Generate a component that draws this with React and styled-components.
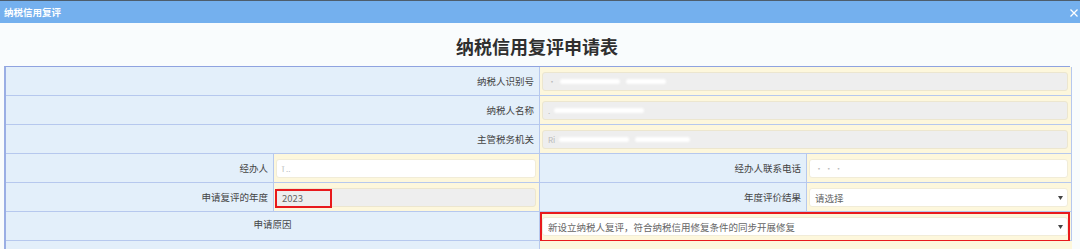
import React from "react";
import styled, { createGlobalStyle } from "styled-components";

const Global = createGlobalStyle`
  html, body { margin: 0; padding: 0; background: #f9fcfd; }
  body { font-family: "Noto Sans CJK SC", "Liberation Sans", sans-serif; overflow: hidden; }
`;

const Page = styled.div`
  width: 1080px;
  height: 249px;
  overflow: hidden;
  border-top: 1px solid #4d5d6c;
  box-sizing: border-box;
  background: #f9fcfd;
`;

const TitleBar = styled.div`
  height: 22px;
  background: #74b0ee;
  display: flex;
  align-items: center;
  justify-content: space-between;
  padding: 0 2px 0 4px;
`;

const BarTitle = styled.span`
  color: #ffffff;
  font-size: 9.5px;
  font-weight: 700;
`;

const Close = styled.svg`
  width: 8px;
  height: 8px;
  margin-top: 1px;
`;

const Body = styled.div`
  padding: 0 10px 0 4px;
`;

const Heading = styled.h1`
  margin: 0;
  height: 43px;
  display: flex;
  align-items: center;
  justify-content: center;
  padding-top: 2px;
  box-sizing: border-box;
  font-size: 18px;
  font-weight: 700;
  color: #2f2f2f;
`;

const Table = styled.div`
  display: grid;
  grid-template-columns: 268px 266px 267px 265px;
  grid-auto-rows: 29px;
  border-top: 1px solid #8fa3e0;
  border-left: 2px solid #9aaee4;
  border-right: 1px solid #8fa3e0;
`;

const Label = styled.div`
  grid-column: span ${(p) => p.$span || 1};
  background: #e3effa;
  border-right: 1px solid #b6c8ee;
  border-bottom: 1px solid #b6c8ee;
  display: flex;
  align-items: center;
  justify-content: ${(p) => (p.$center ? "center" : "flex-end")};
  padding: 0 ${(p) => (p.$center ? "0" : "5px")} ${(p) => (p.$center ? "4px" : "0")} 0;
  font-size: 9.5px;
  color: #444;
  box-sizing: border-box;
  white-space: nowrap;
`;

const Value = styled.div`
  grid-column: span ${(p) => p.$span || 1};
  background: #fdf7dc;
  border-right: 1px solid #b6c8ee;
  border-bottom: 1px solid #b6c8ee;
  display: flex;
  align-items: center;
  padding: 0 3px 0 2px;
  box-sizing: border-box;
  position: relative;
  &:last-child { border-right: none; }
`;

const Field = styled.div`
  flex: 1;
  height: 19px;
  margin-top: 1px;
  border-radius: 3px;
  border: 1px solid ${(p) => (p.$disabled ? "#ece6cf" : "#f1ecd8")};
  background: ${(p) => (p.$disabled ? "#eeeeee" : "#ffffff")};
  display: flex;
  align-items: center;
  justify-content: space-between;
  padding: 0 4px 0 5px;
  box-sizing: border-box;
  font-size: 9.5px;
  color: #666;
  position: relative;
`;

const Blur = styled.span`
  display: inline-block;
  width: ${(p) => p.$w}px;
  height: 5px;
  border-radius: 3px;
  background: #ffffff;
  filter: blur(1.2px);
  margin-left: ${(p) => p.$ml || 0}px;
`;

const Faint = styled.span`
  color: #b9b9b9;
  font-size: 8px;
`;

const Row = styled.span`
  display: flex;
  align-items: center;
`;

const Arrow = styled.svg`
  width: 5px;
  height: 4px;
  flex: none;
`;

const Highlight = styled.div`
  position: absolute;
  left: ${(p) => p.$l}px;
  top: ${(p) => p.$t}px;
  width: ${(p) => p.$w}px;
  height: ${(p) => p.$h}px;
  border: 2px solid #e8191c;
  box-sizing: border-box;
  pointer-events: none;
`;

function Masked({ lead, w1, w2 }) {
  return (
    <Row>
      {lead && <Faint>{lead}</Faint>}
      <Blur $w={w1} $ml={4} />
      {w2 ? <Blur $w={w2} $ml={6} /> : null}
    </Row>
  );
}

function Caret() {
  return (
    <Arrow viewBox="0 0 5 4">
      <path d="M0 0 H5 L2.5 4 Z" fill="#444" />
    </Arrow>
  );
}

export default function App() {
  return (
    <Page>
      <Global />
      <TitleBar>
        <BarTitle>纳税信用复评</BarTitle>
        <Close viewBox="0 0 8 8">
          <path d="M0.5 0.5 L7.5 7.5 M7.5 0.5 L0.5 7.5" stroke="#ffffff" strokeWidth="1.3" />
        </Close>
      </TitleBar>
      <Body>
        <Heading>纳税信用复评申请表</Heading>
        <Table>
          <Label $span={2}>纳税人识别号</Label>
          <Value $span={2}>
            <Field $disabled>
              <Masked lead="·" w1={60} w2={40} />
            </Field>
          </Value>

          <Label $span={2}>纳税人名称</Label>
          <Value $span={2}>
            <Field $disabled>
              <Masked lead="." w1={90} />
            </Field>
          </Value>

          <Label $span={2}>主管税务机关</Label>
          <Value $span={2}>
            <Field $disabled>
              <Masked lead="Ri" w1={70} w2={55} />
            </Field>
          </Value>

          <Label>经办人</Label>
          <Value>
            <Field>
              <Faint>ī ..</Faint>
            </Field>
          </Value>
          <Label>经办人联系电话</Label>
          <Value>
            <Field>
              <Faint>· · ·</Faint>
            </Field>
          </Value>

          <Label>申请复评的年度</Label>
          <Value>
            <Field $disabled>2023</Field>
            <Highlight $l={1} $t={6} $w={57} $h={19} />
          </Value>
          <Label>年度评价结果</Label>
          <Value>
            <Field>
              <span>请选择</span>
              <Caret />
            </Field>
          </Value>

          <Label $span={2} $center>申请原因</Label>
          <Value $span={2}>
            <Field>
              <span>新设立纳税人复评，符合纳税信用修复条件的同步开展修复</span>
              <Caret />
            </Field>
            <Highlight $l={0} $t={0} $w={530} $h={30} />
          </Value>

          <Label $span={2} />
          <Value $span={2} />
        </Table>
      </Body>
    </Page>
  );
}
